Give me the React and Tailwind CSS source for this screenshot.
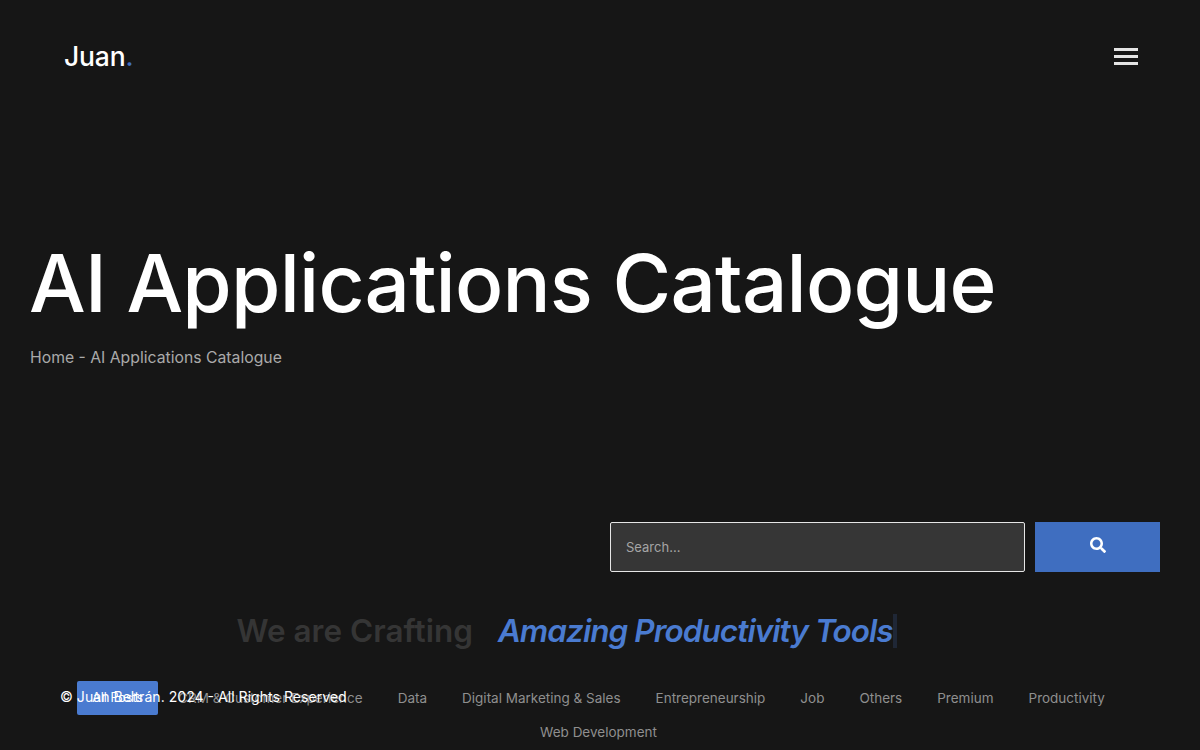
import React from 'react';
import { FaSearch } from 'react-icons/fa';

const filters = ['All Posts', 'CRM & Customer Experience', 'Data', 'Digital Marketing & Sales', 'Entrepreneurship', 'Job', 'Others', 'Premium', 'Productivity', 'Web Development'];

export default function App() {
  return (
    <div className="relative h-[750px] w-full overflow-hidden bg-[#161616] font-['Inter','Lato',sans-serif] text-white">
      <header className="flex h-[112px] items-center justify-between pl-[64px] pr-[62px]">
        <div className="text-[26.5px] font-medium leading-none tracking-[-0.2px]">
          Juan<span className="text-[#3f6ec0]">.</span>
        </div>
        <div className="flex w-[24px] flex-col gap-[4px] pt-[1px]">
          <span className="h-[3px] bg-[#e4e4e4]" />
          <span className="h-[3px] bg-[#e4e4e4]" />
          <span className="h-[3px] bg-[#e4e4e4]" />
        </div>
      </header>

      <section className="pl-[29px] pt-[119px]">
        <h1 className="text-[80px] font-medium leading-[104px] tracking-[-0.8px]">AI Applications Catalogue</h1>
        <p className="ml-[1px] mt-[11px] text-[15.75px] leading-[24px] text-[#aaaaaa]">Home - AI Applications Catalogue</p>
      </section>

      <div className="mt-[152px] flex justify-end gap-[10px] pr-[40px]">
        <div className="flex h-[50px] w-[415px] items-center rounded-[2px] border border-[#e6e6e6] bg-[#363636] pl-[15px] pt-[1px] text-[13px] text-[#a5a5a5]">
          Search...
        </div>
        <button className="flex h-[50px] w-[125px] items-center justify-center bg-[#3f6ec0]">
          <FaSearch size={16} className="-translate-y-[2px] text-white" />
        </button>
      </div>

      <div className="mt-[37px] flex h-[44px] items-center justify-center pr-[67px] text-[31.5px] font-semibold">
        <span className="text-[#353535]">We are Crafting</span>
        <span className="ml-[25px] italic tracking-[-0.95px] text-[#4a7bd0]">Amazing Productivity Tools</span>
        <span className="h-[34px] w-[4px] bg-[#1f2736]" />
      </div>

      <nav className="mt-[28px] flex flex-wrap justify-center gap-x-[5px] pl-[40px] pr-[43px] text-[13.5px] text-[#8f8f8f]">
        {filters.map((f, i) => (
          <span
            key={f}
            className={`flex h-[34px] items-center justify-center rounded-[2px] ${i === 0 ? 'w-[81px] bg-[#4a7bd0] text-[12.5px] text-white' : 'px-[15px]'}`}
          >
            {f}
          </span>
        ))}
      </nav>

      <div className="absolute left-[60px] top-[686px] text-[14.1px] leading-[22px] text-white">
        © Juan Beltrán. 2024 - All Rights Reserved
      </div>
    </div>
  );
}
